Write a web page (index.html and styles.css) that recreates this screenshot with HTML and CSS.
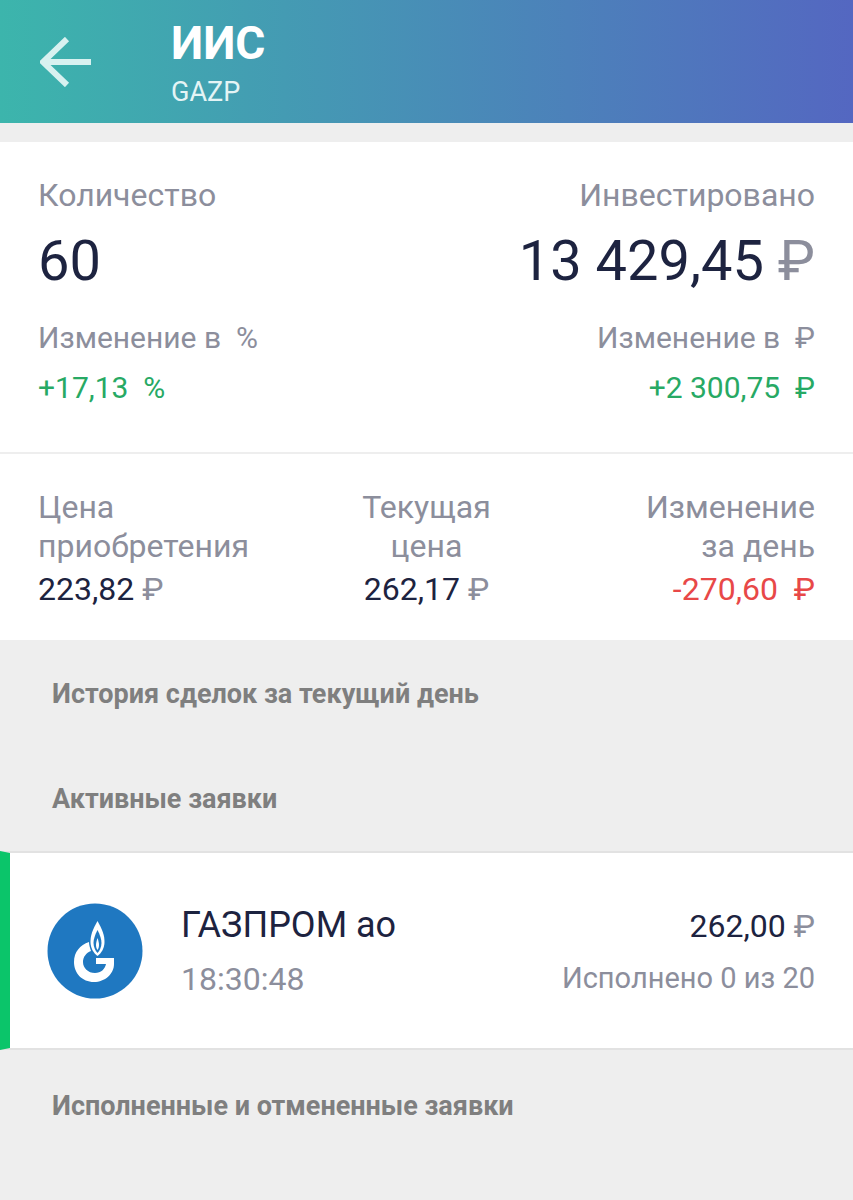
FILE: index.html
```html
<!DOCTYPE html>
<html lang="ru">
<head>
  <meta charset="UTF-8"/>
  <meta name="viewport" content="width=device-width, initial-scale=1.0"/>
  <title>ИИС GAZP</title>
  <link rel="stylesheet" href="styles.css">
</head>
<body>

  <header class="topbar">
    <svg class="back-icon" viewBox="0 0 52 50" width="52" height="50">
      <path d="M51 25H4M27 2L3 25l24 23" fill="none" stroke="#d8f1f0" stroke-width="6"/>
    </svg>
    <div class="topbar-titles">
      <h1>ИИС</h1>
      <p>GAZP</p>
    </div>
  </header>

  <!-- Summary -->
  <section class="summary">
    <div class="summary-main">
      <div class="col">
        <div class="label">Количество</div>
        <div class="big-value">60</div>
      </div>
      <div class="col col-right">
        <div class="label">Инвестировано</div>
        <div class="big-value">13 429,45 <span class="rub">₽</span></div>
      </div>
    </div>
    <div class="summary-change">
      <div class="col">
        <div class="label-small">Изменение в  %</div>
        <div class="change up">+17,13  %</div>
      </div>
      <div class="col col-right">
        <div class="label-small">Изменение в  ₽</div>
        <div class="change up">+2 300,75  ₽</div>
      </div>
    </div>
  </section>

  <!-- Prices -->
  <section class="prices">
    <div class="price-col">
      <div class="price-label">Цена<br>приобретения</div>
      <div class="price-value">223,82 <span class="rub">₽</span></div>
    </div>
    <div class="price-col price-mid">
      <div class="price-label">Текущая<br>цена</div>
      <div class="price-value">262,17 <span class="rub">₽</span></div>
    </div>
    <div class="price-col price-end">
      <div class="price-label">Изменение<br>за день</div>
      <div class="price-value down">-270,60  ₽</div>
    </div>
  </section>

  <h2 class="group-title first">История сделок за текущий день</h2>
  <h2 class="group-title active">Активные заявки</h2>

  <div class="order">
    <svg class="order-logo" viewBox="0 0 96 96" width="96" height="96">
      <circle cx="48" cy="48" r="47.5" fill="#1f78c1"/>
      <path d="M50.5 18c-5 9-7 14-7 21 0 6 3 11 7 14 4-3 7-8 7-14 0-7-2-12-7-21z" fill="#fff"/>
      <path d="M50.5 27c-2.500 5-4 9-4 13 0 4 2 8 4 10 2-2 4-6 4-10 0-4-1.500-8-4-13z" fill="#1f78c1"/>
      <path d="M50.500 35c-1 3-1.500 5-1.500 7 0 2 .7 4 1.500 5 .8-1 1.500-3 1.500-5 0-2-.5-4-1.500-7z" fill="#fff"/>
      <path d="M42 39c-9 3-15 10-15 20 0 11 8 20 20 20 11 0 20-8 20-18v-6H49v6h10c-1 5-5 9-11 9-7 0-12-5-12-11 0-5 3-9 8-11-1-3-2-6-2-9z" fill="#fff"/>
    </svg>
    <div class="order-info">
      <div class="order-name">ГАЗПРОМ ао</div>
      <div class="order-time">18:30:48</div>
    </div>
    <div class="order-side">
      <div class="order-price">262,00 <span class="rub">₽</span></div>
      <div class="order-filled">Исполнено 0 из 20</div>
    </div>
  </div>

  <h2 class="group-title done">Исполненные и отмененные заявки</h2>

</body>
</html>
```

FILE: styles.css
```css
body {
  font-family: Roboto, "Noto Sans", sans-serif;
  margin: 0;
  padding: 0;
  background-color: #eeeeee;
  color: #1d2340;
  height: 1200px;
  overflow: hidden;
}

.topbar {
  display: flex;
  align-items: center;
  height: 123px;
  padding-left: 40px;
  box-sizing: border-box;
  background: linear-gradient(to right, #3cb5ac, #5467c1);
  color: white;
}

.back-icon {
  margin-right: 79px;
  flex-shrink: 0;
}

.topbar-titles h1 {
  margin: 0;
  font-size: 46px;
  line-height: 54px;
  font-weight: 700;
}

.topbar-titles p {
  margin: 6px 0 0;
  font-size: 27px;
  line-height: 32px;
  color: #e4f4f5;
}

.summary {
  margin-top: 19px;
  height: 310px;
  box-sizing: border-box;
  padding: 34px 38px 0;
  background-color: white;
}

.summary-main,
.summary-change {
  display: flex;
  justify-content: space-between;
}

.summary-change {
  margin-top: 26px;
}

.col-right {
  text-align: right;
}

.label {
  font-size: 32px;
  line-height: 38px;
  color: #8c8e9c;
}

.big-value {
  margin-top: 14px;
  font-size: 56px;
  line-height: 66px;
  white-space: pre;
}

.label-small {
  font-size: 30px;
  line-height: 36px;
  color: #8c8e9c;
  white-space: pre;
}

.change {
  margin-top: 14px;
  font-size: 30px;
  line-height: 36px;
  white-space: pre;
}

.up {
  color: #27a964;
}

.down {
  color: #e84848;
}

.rub {
  color: #8c8e9c;
}

.prices {
  display: grid;
  grid-template-columns: 1fr 1fr 1fr;
  height: 186px;
  box-sizing: border-box;
  margin-top: 2px;
  padding: 34px 38px 0;
  background-color: white;
}

.price-label {
  font-size: 32px;
  line-height: 39px;
  color: #8c8e9c;
}

.price-value {
  margin-top: 4px;
  font-size: 32px;
  line-height: 38px;
  white-space: pre;
}

.price-mid {
  text-align: center;
}

.price-end {
  text-align: right;
}

.group-title {
  margin: 0 0 0 52px;
  font-size: 27px;
  line-height: 32px;
  font-weight: 700;
  color: #7f7f7f;
}

.group-title.first {
  margin-top: 38px;
}

.group-title.active {
  margin-top: 73px;
}

.group-title.done {
  margin-top: 40px;
}

.order {
  display: flex;
  align-items: center;
  height: 199px;
  box-sizing: border-box;
  margin-top: 36px;
  padding: 0 38px 0 37px;
  background-color: white;
  border-left: 10px solid #0bc56a;
  border-top: 2px solid #e2e2e2;
  border-bottom: 2px solid #e2e2e2;
}

.order-logo {
  margin-right: 38px;
  flex-shrink: 0;
}

.order-info {
  flex: 1;
}

.order-name {
  font-size: 36px;
  line-height: 42px;
}

.order-time {
  margin-top: 14px;
  font-size: 32px;
  line-height: 38px;
  color: #8c8e9c;
}

.order-side {
  text-align: right;
}

.order-price {
  font-size: 32px;
  line-height: 38px;
  white-space: pre;
}

.order-filled {
  margin-top: 16px;
  font-size: 29px;
  line-height: 34px;
  color: #8c8e9c;
}
```
